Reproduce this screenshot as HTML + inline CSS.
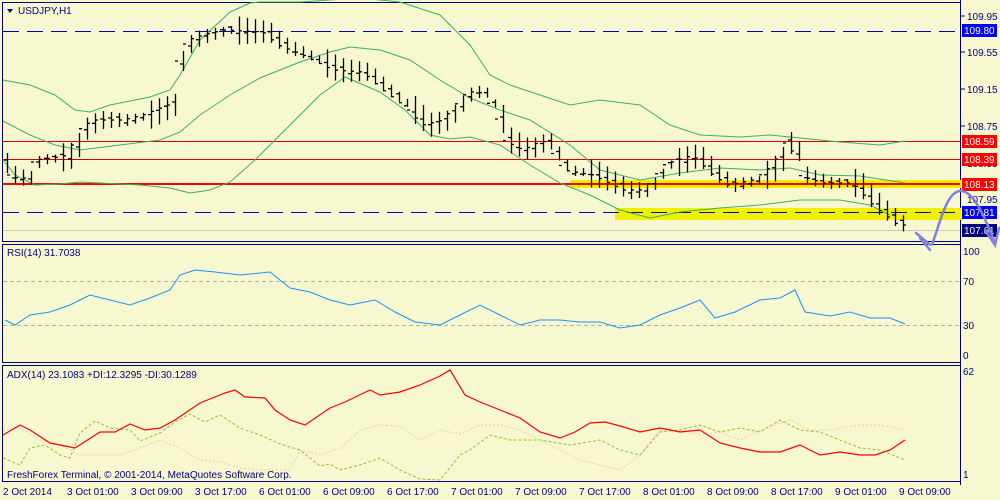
<!DOCTYPE html>
<html><head><meta charset="utf-8"><style>
body{margin:0;width:1000px;height:500px;background:#f8f8d0;overflow:hidden;font-family:"Liberation Sans",sans-serif}
svg{display:block}
text{font-family:"Liberation Sans",sans-serif;font-size:10px;fill:#000080}
</style></head><body>
<svg id="s" width="1000" height="500" viewBox="0 0 1000 500">
<rect width="1000" height="500" fill="#f8f8d0"/>
<rect x="2.5" y="2.5" width="958" height="239" fill="none" stroke="#000080"/>
<rect x="2.5" y="244.5" width="958" height="118" fill="none" stroke="#000080"/>
<rect x="2.5" y="365.5" width="958" height="116" fill="none" stroke="#000080"/>
<line x1="960.5" y1="0" x2="960.5" y2="485" stroke="#000080"/>
<rect x="570" y="180" width="391" height="8" fill="#f0f000"/>
<rect x="615" y="208" width="346" height="12" fill="#f0f000"/>
<line x1="3" y1="31.5" x2="960" y2="31.5" stroke="#0000c0" stroke-dasharray="16,8"/>
<line x1="3" y1="141.5" x2="960" y2="141.5" stroke="#e00000"/>
<line x1="3" y1="159.5" x2="960" y2="159.5" stroke="#e00000"/>
<line x1="3" y1="184" x2="960" y2="184" stroke="#ff0000" stroke-width="2"/>
<line x1="3" y1="212.5" x2="960" y2="212.5" stroke="#0000c0" stroke-dasharray="16,8"/>
<line x1="3" y1="230.5" x2="960" y2="230.5" stroke="#c8c8c8"/>
<line x1="3" y1="281.5" x2="960" y2="281.5" stroke="#b0b0b0" stroke-dasharray="4,3"/>
<line x1="3" y1="325.5" x2="960" y2="325.5" stroke="#b0b0b0" stroke-dasharray="4,3"/>
<polyline fill="none" stroke="#3cb060" points="3,80 30,85 55,95 75,110 90,112 110,105 150,97 170,90 180,75 200,40 230,12 250,3 260,2 300,2 330,0 360,-2 400,2 440,15 470,45 490,75 510,85 540,95 570,105 600,100 640,105 670,125 700,135 740,137 770,135 800,138 840,142 880,145 905,141"/>
<polyline fill="none" stroke="#3cb060" points="3,121 30,135 55,145 80,150 120,145 160,140 180,132 200,115 230,95 260,78 300,62 330,52 350,47 380,50 410,60 440,80 470,98 500,110 530,120 570,145 600,170 640,180 680,173 720,168 760,170 790,168 820,175 860,176 905,183"/>
<polyline fill="none" stroke="#3cb060" points="3,160 15,175 35,185 60,184 80,182 140,185 170,188 190,193 210,190 230,182 255,160 275,140 300,115 320,95 345,77 380,92 405,110 430,135 450,139 470,137 500,145 530,165 560,183 590,195 620,210 650,218 680,212 720,208 760,205 800,200 840,200 870,205 890,215"/>
<g id="bars" stroke="#000" stroke-width="1.3" fill="none"></g>
<polyline fill="none" stroke="#1e90ff" points="5,320 15,325 30,315 50,312 70,305 90,295 110,300 130,305 150,298 170,290 180,275 195,270 215,272 240,275 270,272 290,288 310,292 330,300 350,305 375,300 395,312 415,322 440,325 460,315 480,305 500,315 520,325 540,320 560,320 580,322 600,322 620,328 640,325 660,315 680,308 700,300 715,318 735,312 760,300 780,298 795,290 805,312 830,316 850,312 870,318 890,318 905,324"/>
<polyline fill="none" stroke="#f0c8b0" stroke-dasharray="2,2" points="3,430 20,428 40,440 60,445 80,455 100,455 120,455 140,448 160,440 180,448 200,460 220,462 240,468 260,470 290,470 300,450 320,455 340,448 360,430 380,425 400,426 420,440 440,430 460,434 480,425 500,425 520,430 540,440 560,450 580,460 600,465 620,470 640,455 660,430 680,430 700,435 720,432 740,440 760,430 790,420 810,430 830,430 860,425 880,425 905,430"/>
<polyline fill="none" stroke="#90c030" stroke-dasharray="3,2" points="3,458 20,465 30,448 45,445 60,455 70,458 80,433 95,421 110,428 130,430 140,441 160,433 175,422 190,414 205,422 220,415 240,428 260,435 280,444 300,450 320,466 330,464 340,470 360,465 380,458 400,470 420,479 440,480 460,455 470,450 490,435 510,440 540,440 570,445 600,440 620,450 640,455 660,432 680,430 700,425 720,432 740,428 760,432 780,420 800,430 820,432 840,440 860,448 880,450 905,460"/>
<polyline fill="none" stroke="#ff0000" stroke-width="1.2" points="3,435 20,425 30,430 50,443 65,446 75,448 100,432 115,432 130,424 145,430 160,428 175,420 200,403 225,393 235,390 245,397 265,398 275,410 290,420 305,425 330,408 345,402 370,390 380,395 400,392 420,385 440,376 450,370 465,395 480,402 500,410 520,418 540,432 560,438 575,432 590,423 605,422 620,426 640,432 660,428 680,432 700,430 720,443 740,448 760,452 780,452 800,445 820,455 840,452 860,455 875,455 890,450 905,440"/>
<g>
<line x1="961" y1="16" x2="965" y2="16" stroke="#000080"/><text x="967" y="20">109.95</text>
<rect x="962" y="24" width="35" height="13" fill="#0000ff"/><text x="964" y="34" style="fill:#fff">109.80</text>
<line x1="961" y1="52" x2="965" y2="52" stroke="#000080"/><text x="967" y="56">109.55</text>
<line x1="961" y1="89" x2="965" y2="89" stroke="#000080"/><text x="967" y="93">109.15</text>
<line x1="961" y1="126" x2="965" y2="126" stroke="#000080"/><text x="967" y="130">108.75</text>
<rect x="962" y="135" width="35" height="13" fill="#ff0000"/><text x="964" y="145" style="fill:#fff">108.59</text>
<text x="967" y="167">108.35</text>
<rect x="962" y="153" width="35" height="13" fill="#ff0000"/><text x="964" y="163" style="fill:#fff">108.39</text>
<rect x="962" y="178" width="35" height="13" fill="#ff0000"/><text x="964" y="188" style="fill:#fff">108.13</text>
<text x="967" y="203">107.95</text>
<rect x="962" y="206" width="35" height="13" fill="#0000ff"/><text x="964" y="216" style="fill:#fff">107.81</text>
<rect x="962" y="224" width="35" height="13" fill="#000080"/><text x="964" y="234" style="fill:#fff">107.61</text>
<text x="963" y="255">100</text><text x="963" y="285">70</text><text x="963" y="329">30</text><text x="963" y="359">0</text>
<text x="963" y="375">62</text><text x="963" y="478">1</text>
</g>
<path d="M916,233 L928,243 Q932,247 933,242 C942,215 948,192 960,191 C972,190 982,210 995,243" fill="none" stroke="#8080e0" stroke-width="2.5" stroke-linecap="round"/>
<path d="M920,238 L930,250 M985,230 L995,245 L999,228" fill="none" stroke="#8080e0" stroke-width="2.5" stroke-linecap="round"/>
<path d="M7,9 l6,0 l-3,4z" fill="#000080"/>
<text x="18" y="14">USDJPY,H1</text>
<text x="7" y="256">RSI(14) 31.7038</text>
<text x="7" y="378">ADX(14) 23.1083 +DI:12.3295 -DI:30.1289</text>
<text x="7" y="478">FreshForex Terminal, © 2001-2014, MetaQuotes Software Corp.</text>
<g>
<text x="3" y="495">2 Oct 2014</text><text x="67" y="495">3 Oct 01:00</text><text x="131" y="495">3 Oct 09:00</text><text x="195" y="495">3 Oct 17:00</text><text x="259" y="495">6 Oct 01:00</text><text x="323" y="495">6 Oct 09:00</text><text x="387" y="495">6 Oct 17:00</text><text x="451" y="495">7 Oct 01:00</text><text x="515" y="495">7 Oct 09:00</text><text x="579" y="495">7 Oct 17:00</text><text x="643" y="495">8 Oct 01:00</text><text x="707" y="495">8 Oct 09:00</text><text x="771" y="495">8 Oct 17:00</text><text x="835" y="495">9 Oct 01:00</text><text x="899" y="495">9 Oct 09:00</text>
</g>
</svg>
<script>
var pts=[[5,160],[15,175],[30,180],[40,160],[60,158],[75,155],[85,130],[100,120],[130,120],[150,115],[175,105],[185,50],[195,40],[210,35],[230,30],[270,32],[285,45],[310,55],[340,70],[370,72],[390,90],[410,105],[430,125],[450,120],[470,95],[485,90],[500,110],[510,140],[530,150],[550,140],[570,170],[600,175],[630,190],[650,190],[670,165],[700,155],[720,175],[735,185],[760,180],[780,165],[795,135],[805,175],[830,183],[860,183],[880,205],[905,225]];
function y(x){for(var i=0;i<pts.length-1;i++){if(x>=pts[i][0]&&x<=pts[i+1][0]){var t=(x-pts[i][0])/(pts[i+1][0]-pts[i][0]);return pts[i][1]+t*(pts[i+1][1]-pts[i][1]);}}return pts[pts.length-1][1];}
var d="";
for(var x=7;x<=905;x+=8){var c=y(x),h=4+((x*37)%11),o=c+((x*13)%7)-3,cl=y(x+8);
d+="M"+x+".5,"+(c-h)+"V"+(c+h)+"M"+(x-3)+","+o+"H"+x+"M"+x+","+cl+"H"+(x+3);}
var p=document.createElementNS("http://www.w3.org/2000/svg","path");p.setAttribute("d",d);document.getElementById("bars").appendChild(p);
</script>
</body></html>
